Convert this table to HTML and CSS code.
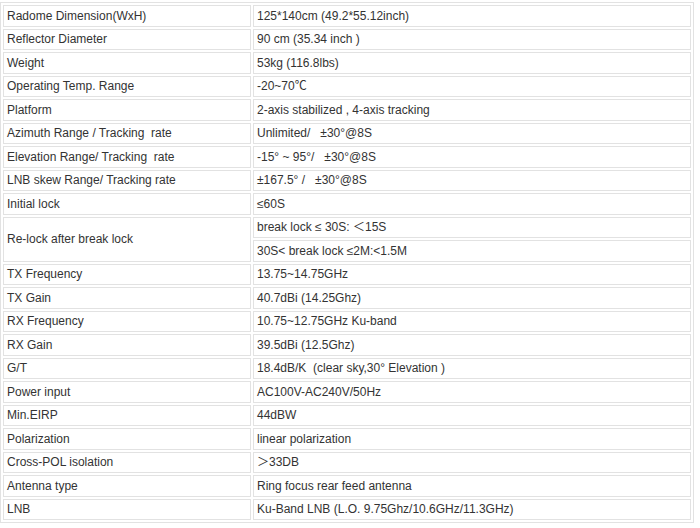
FILE: index.html
```html
<!DOCTYPE html>
<html>
<head>
<meta charset="utf-8">
<link rel="stylesheet" href="styles.css">
</head>
<body>
<table class="spec">
<tr><td class="k">Radome Dimension(WxH)</td><td class="v">125*140cm (49.2*55.12inch)</td></tr>
<tr><td class="k">Reflector Diameter</td><td class="v">90 cm (35.34 inch )</td></tr>
<tr><td class="k">Weight</td><td class="v">53kg (116.8lbs)</td></tr>
<tr><td class="k">Operating Temp. Range</td><td class="v">-20~70℃</td></tr>
<tr><td class="k">Platform</td><td class="v">2-axis stabilized , 4-axis tracking</td></tr>
<tr><td class="k">Azimuth Range / Tracking&nbsp; rate</td><td class="v">Unlimited/&nbsp;&nbsp; ±30°@8S</td></tr>
<tr><td class="k">Elevation Range/ Tracking&nbsp; rate</td><td class="v">-15° ~ 95°/&nbsp;&nbsp; ±30°@8S</td></tr>
<tr><td class="k">LNB skew Range/ Tracking rate</td><td class="v">±167.5° /&nbsp;&nbsp; ±30°@8S</td></tr>
<tr><td class="k">Initial lock</td><td class="v">≤60S</td></tr>
<tr><td class="k" rowspan="2">Re-lock after break lock</td><td class="v">break lock ≤ 30S: ＜15S</td></tr>
<tr><td class="v">30S&lt; break lock ≤2M:&lt;1.5M</td></tr>
<tr><td class="k">TX Frequency</td><td class="v">13.75~14.75GHz</td></tr>
<tr><td class="k">TX Gain</td><td class="v">40.7dBi (14.25Ghz)</td></tr>
<tr><td class="k">RX Frequency</td><td class="v">10.75~12.75GHz Ku-band</td></tr>
<tr><td class="k">RX Gain</td><td class="v">39.5dBi (12.5Ghz)</td></tr>
<tr><td class="k">G/T</td><td class="v">18.4dB/K&nbsp; (clear sky,30° Elevation )</td></tr>
<tr><td class="k">Power input</td><td class="v">AC100V-AC240V/50Hz</td></tr>
<tr><td class="k">Min.EIRP</td><td class="v">44dBW</td></tr>
<tr><td class="k">Polarization</td><td class="v">linear polarization</td></tr>
<tr><td class="k">Cross-POL isolation</td><td class="v">＞33DB</td></tr>
<tr><td class="k">Antenna type</td><td class="v">Ring focus rear feed antenna</td></tr>
<tr><td class="k">LNB</td><td class="v">Ku-Band LNB (L.O. 9.75Ghz/10.6GHz/11.3GHz)</td></tr>
</table>
</body>
</html>
```
FILE: styles.css
```css
html, body {
  margin: 0;
  padding: 0;
  background: #ffffff;
}
body {
  padding: 2px 0 0 0;
}
.spec {
  border: 1px solid #e2e2e2;
  border-collapse: separate;
  border-spacing: 2px;
  width: 694px;
  font-family: "Liberation Sans", Arial, "Noto Sans CJK SC", sans-serif;
  font-size: 12px;
  color: #333333;
}
.spec td {
  border: 1px solid #e2e2e2;
  padding: 0 3px;
  height: 19.5px;
  line-height: 16px;
  vertical-align: middle;
  white-space: nowrap;
}
.spec td.k {
  width: 240px;
}
```
